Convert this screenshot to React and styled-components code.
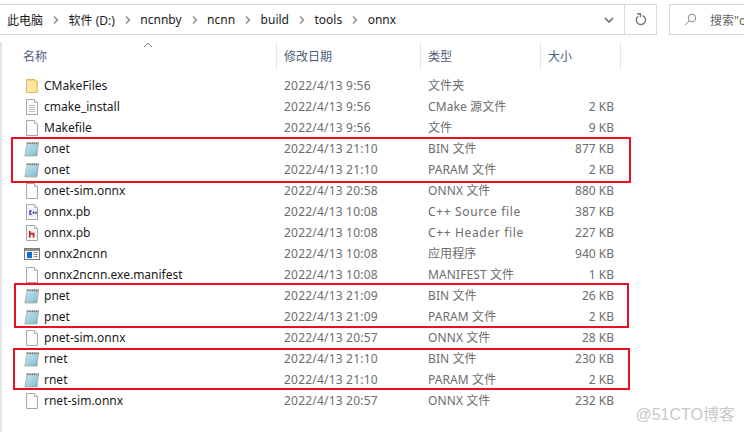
import React from 'react';
import styled, { createGlobalStyle } from 'styled-components';

const GlobalStyle = createGlobalStyle`
  html, body {
    margin: 0;
    padding: 0;
    background: #fff;
  }
  body {
    font-family: "Noto Sans", "Noto Sans CJK SC", sans-serif;
    font-size: 12px;
  }
`;

const COLS = '277px 144px 120px 80px';

const Page = styled.div`
  position: relative;
  width: 744px;
  height: 432px;
  overflow: hidden;
  background: #fff;
`;

const TopBar = styled.div`
  display: flex;
  align-items: stretch;
  height: 31px;
  margin-top: 4px;
  box-sizing: border-box;
`;

const AddressBox = styled.div`
  display: flex;
  align-items: center;
  width: 657px;
  border: 1px solid #d9d9d9;
  border-left: none;
  box-sizing: border-box;
  padding-left: 7px;
`;

const Crumb = styled.span`
  color: #1a1a1a;
  white-space: nowrap;
`;

const Sep = styled.svg`
  width: 6px;
  height: 8px;
  margin: 0 9.5px 0 10px;
  flex: none;
`;

const Grow = styled.div`
  flex: 1;
`;

const Chevron = styled.svg`
  width: 10px;
  height: 6px;
  margin-right: 10px;
`;

const RefreshCell = styled.div`
  display: flex;
  align-items: center;
  justify-content: center;
  width: 31px;
  align-self: stretch;
  border-left: 1px solid #d9d9d9;
`;

const SearchBox = styled.div`
  display: flex;
  align-items: center;
  margin-left: 12px;
  flex: 1;
  min-width: 0;
  border: 1px solid #d9d9d9;
  border-right: none;
  padding-left: 14px;
  color: #666;
  white-space: nowrap;
  overflow: hidden;
`;

const SearchIcon = styled.svg`
  width: 13px;
  height: 13px;
  flex: none;
`;

const SearchText = styled.span`
  margin-left: 13px;
`;

const Body = styled.div`
  display: flex;
`;

const Gutter = styled.div`
  width: 2px;
  height: 390px;
  margin-top: 7px;
  background: #e4e4e4;
  flex: none;
`;

const ListPane = styled.div`
  margin-left: -2px;
  flex: 1;
`;

const HeaderRow = styled.div`
  display: grid;
  grid-template-columns: ${COLS};
  height: 27px;
  margin-top: 7px;
`;

const HeaderCell = styled.div`
  position: relative;
  display: flex;
  align-items: center;
  padding-left: ${(p) => p.$pad}px;
  color: #4c607a;
  border-right: 1px solid #e5e5e5;
  box-sizing: border-box;
`;

const SortMark = styled.svg`
  position: absolute;
  left: 143px;
  top: 0;
  width: 10px;
  height: 6px;
`;

const Rows = styled.div`
  margin-top: 6px;
`;

const Row = styled.div`
  display: grid;
  grid-template-columns: ${COLS};
  height: 21px;
  align-items: center;
  line-height: 21px;
`;

const NameCell = styled.div`
  display: flex;
  align-items: center;
  padding-left: 24px;
  color: #1a1a1a;
  white-space: nowrap;
`;

const IconSlot = styled.svg`
  width: 16px;
  height: 16px;
  flex: none;
  margin-right: 4px;
`;

const DateCell = styled.div`
  padding-left: 7px;
  color: #6d6d6d;
  letter-spacing: 0.2px;
`;

const TypeCell = styled.div`
  padding-left: 7px;
  color: #6d6d6d;
  white-space: nowrap;
  letter-spacing: ${(p) => (p.$wide ? '0.65px' : '0.1px')};
`;

const SizeCell = styled.div`
  text-align: right;
  padding-right: 7px;
  color: #6d6d6d;
`;

const RedBox = styled.div`
  position: absolute;
  left: ${(p) => p.$x}px;
  top: ${(p) => p.$y}px;
  width: ${(p) => p.$w}px;
  height: ${(p) => p.$h}px;
  border: 2px solid #e81123;
  box-sizing: border-box;
`;

const Watermark = styled.div`
  position: absolute;
  right: 9px;
  bottom: 7px;
  font-family: "Liberation Sans", "Noto Sans CJK SC", sans-serif;
  font-size: 16px;
  color: #c8c8c8;
`;

const FolderIcon = () => (
  <IconSlot viewBox="0 0 16 16">
    <path d="M2.5 1.5h8l3 2v11h-11z" fill="#f6d271" stroke="#dcb85e" />
    <path d="M3 3h8.5v11H3z" fill="#ffe8a6" />
    <path d="M11.5 3.5h2v11h-2z" fill="#f8d77e" />
  </IconSlot>
);

const DocShape = ({ children }) => (
  <IconSlot viewBox="0 0 16 16">
    <path d="M2.5 .5h8l3 3v12h-11z" fill="#fcfcfc" stroke="#a6a6a6" />
    <path d="M10.5 .5v3h3" fill="#eee" stroke="#b5b5b5" />
    {children}
  </IconSlot>
);

const PlainIcon = () => <DocShape />;

const LinesIcon = () => (
  <DocShape>
    <path d="M5 6.5h6M5 8.5h6M5 10.5h6M5 12.5h6" stroke="#bdbdbd" />
  </DocShape>
);

const CppIcon = () => (
  <DocShape>
    <rect x="3" y="4.5" width="10" height="8" fill="#eeeef8" />
    <path d="M7.6 7H6v3.4h1.6" fill="none" stroke="#3a3ab0" strokeWidth="1.3" />
    <path d="M8.4 8.7h2.2M9.5 7.6v2.2M10.9 8.7h2M11.9 7.6v2.2" stroke="#3a3ab0" />
  </DocShape>
);

const HeaderIcon = () => (
  <DocShape>
    <rect x="3" y="4.5" width="10" height="9" fill="#f8f0f0" />
    <path d="M5.8 6v6.4M6.2 8.6h3.4v3.8" fill="none" stroke="#b02a2a" strokeWidth="1.7" />
  </DocShape>
);

const ExeIcon = () => (
  <IconSlot viewBox="0 0 16 16">
    <rect x=".5" y="2.5" width="15" height="11" fill="#f7f7f7" stroke="#7d7d7d" />
    <rect x="1" y="3" width="14" height="2" fill="#8f8f8f" />
    <rect x="3" y="6" width="5" height="6" fill="#0f6fd4" />
    <path d="M9.5 6.5h4M9.5 8.5h4M9.5 10.5h4" stroke="#8c8c8c" />
  </IconSlot>
);

const NoteIcon = () => (
  <IconSlot viewBox="0 0 16 16">
    <defs>
      <linearGradient id="note" x1="0" y1="0" x2="1" y2="1">
        <stop offset="0" stopColor="#d2ecf5" />
        <stop offset="1" stopColor="#6bb0c9" />
      </linearGradient>
    </defs>
    <path d="M3 2.5h11.5l-1.5 12.5H.8z" fill="url(#note)" stroke="#b3ad96" strokeWidth=".8" />
    <path d="M3.2 1v2.2M5 1v2.2M6.8 1v2.2M8.6 1v2.2M10.4 1v2.2M12.2 1v2.2M14 1v2.2" stroke="#5f5f5f" strokeWidth=".8" />
    <path d="M3 6h10M2.6 8h10M2.4 10h10M2.1 12h10" stroke="#a8d8e6" strokeWidth=".7" />
  </IconSlot>
);

const files = [
  ['CMakeFiles', FolderIcon, '2022/4/13 9:56', '文件夹', ''],
  ['cmake_install', LinesIcon, '2022/4/13 9:56', 'CMake 源文件', '2 KB'],
  ['Makefile', PlainIcon, '2022/4/13 9:56', '文件', '9 KB'],
  ['onet', NoteIcon, '2022/4/13 21:10', 'BIN 文件', '877 KB'],
  ['onet', NoteIcon, '2022/4/13 21:10', 'PARAM 文件', '2 KB'],
  ['onet-sim.onnx', PlainIcon, '2022/4/13 20:58', 'ONNX 文件', '880 KB'],
  ['onnx.pb', CppIcon, '2022/4/13 10:08', 'C++ Source file', '387 KB'],
  ['onnx.pb', HeaderIcon, '2022/4/13 10:08', 'C++ Header file', '227 KB'],
  ['onnx2ncnn', ExeIcon, '2022/4/13 10:08', '应用程序', '940 KB'],
  ['onnx2ncnn.exe.manifest', PlainIcon, '2022/4/13 10:08', 'MANIFEST 文件', '1 KB'],
  ['pnet', NoteIcon, '2022/4/13 21:09', 'BIN 文件', '26 KB'],
  ['pnet', NoteIcon, '2022/4/13 21:09', 'PARAM 文件', '2 KB'],
  ['pnet-sim.onnx', PlainIcon, '2022/4/13 20:57', 'ONNX 文件', '28 KB'],
  ['rnet', NoteIcon, '2022/4/13 21:10', 'BIN 文件', '230 KB'],
  ['rnet', NoteIcon, '2022/4/13 21:10', 'PARAM 文件', '2 KB'],
  ['rnet-sim.onnx', PlainIcon, '2022/4/13 20:57', 'ONNX 文件', '232 KB'],
];

const crumbs = ['此电脑', '软件 (D:)', 'ncnnby', 'ncnn', 'build', 'tools', 'onnx'];

const App = () => (
  <Page>
    <GlobalStyle />
    <TopBar>
      <AddressBox>
        {crumbs.map((c, i) => (
          <React.Fragment key={c}>
            {i > 0 && (
              <Sep viewBox="0 0 6 8">
                <path d="M1 .5 4.5 4 1 7.5" fill="none" stroke="#8a8a8a" strokeWidth="1.4" />
              </Sep>
            )}
            <Crumb>{c}</Crumb>
          </React.Fragment>
        ))}
        <Grow />
        <Chevron viewBox="0 0 10 6">
          <path d="M1 1l4 4 4-4" fill="none" stroke="#666" strokeWidth="1.5" />
        </Chevron>
        <RefreshCell>
          <svg width="12" height="14" viewBox="0 0 12 14">
            <path d="M7.5 2.6A4.6 4.6 0 1 1 3 3.4" fill="none" stroke="#777" strokeWidth="1.4" />
            <path d="M2 .8h3.4v3.4" fill="none" stroke="#777" strokeWidth="1.4" />
          </svg>
        </RefreshCell>
      </AddressBox>
      <SearchBox>
        <SearchIcon viewBox="0 0 13 13">
          <circle cx="8" cy="5" r="3.8" fill="none" stroke="#888" />
          <path d="M5.2 7.8.8 12.2" stroke="#888" />
        </SearchIcon>
        <SearchText>搜索"onnx"</SearchText>
      </SearchBox>
    </TopBar>
    <Body>
      <Gutter />
      <ListPane>
        <HeaderRow>
          <HeaderCell $pad={23}>
            名称
            <SortMark viewBox="0 0 10 6">
              <path d="M1 5l4-4 4 4" fill="none" stroke="#777" />
            </SortMark>
          </HeaderCell>
          <HeaderCell $pad={7}>修改日期</HeaderCell>
          <HeaderCell $pad={7}>类型</HeaderCell>
          <HeaderCell $pad={7}>大小</HeaderCell>
        </HeaderRow>
        <Rows>
          {files.map(([name, Icon, date, type, size], i) => (
            <Row key={i}>
              <NameCell>
                <Icon />
                {name}
              </NameCell>
              <DateCell>{date}</DateCell>
              <TypeCell $wide={type.startsWith('C++')}>{type}</TypeCell>
              <SizeCell>{size}</SizeCell>
            </Row>
          ))}
        </Rows>
      </ListPane>
    </Body>
    <RedBox $x={11} $y={137} $w={620} $h={46} />
    <RedBox $x={14} $y={283} $w={615} $h={45} />
    <RedBox $x={13} $y={348} $w={617} $h={42} />
    <Watermark>@51CTO博客</Watermark>
  </Page>
);

export default App;
